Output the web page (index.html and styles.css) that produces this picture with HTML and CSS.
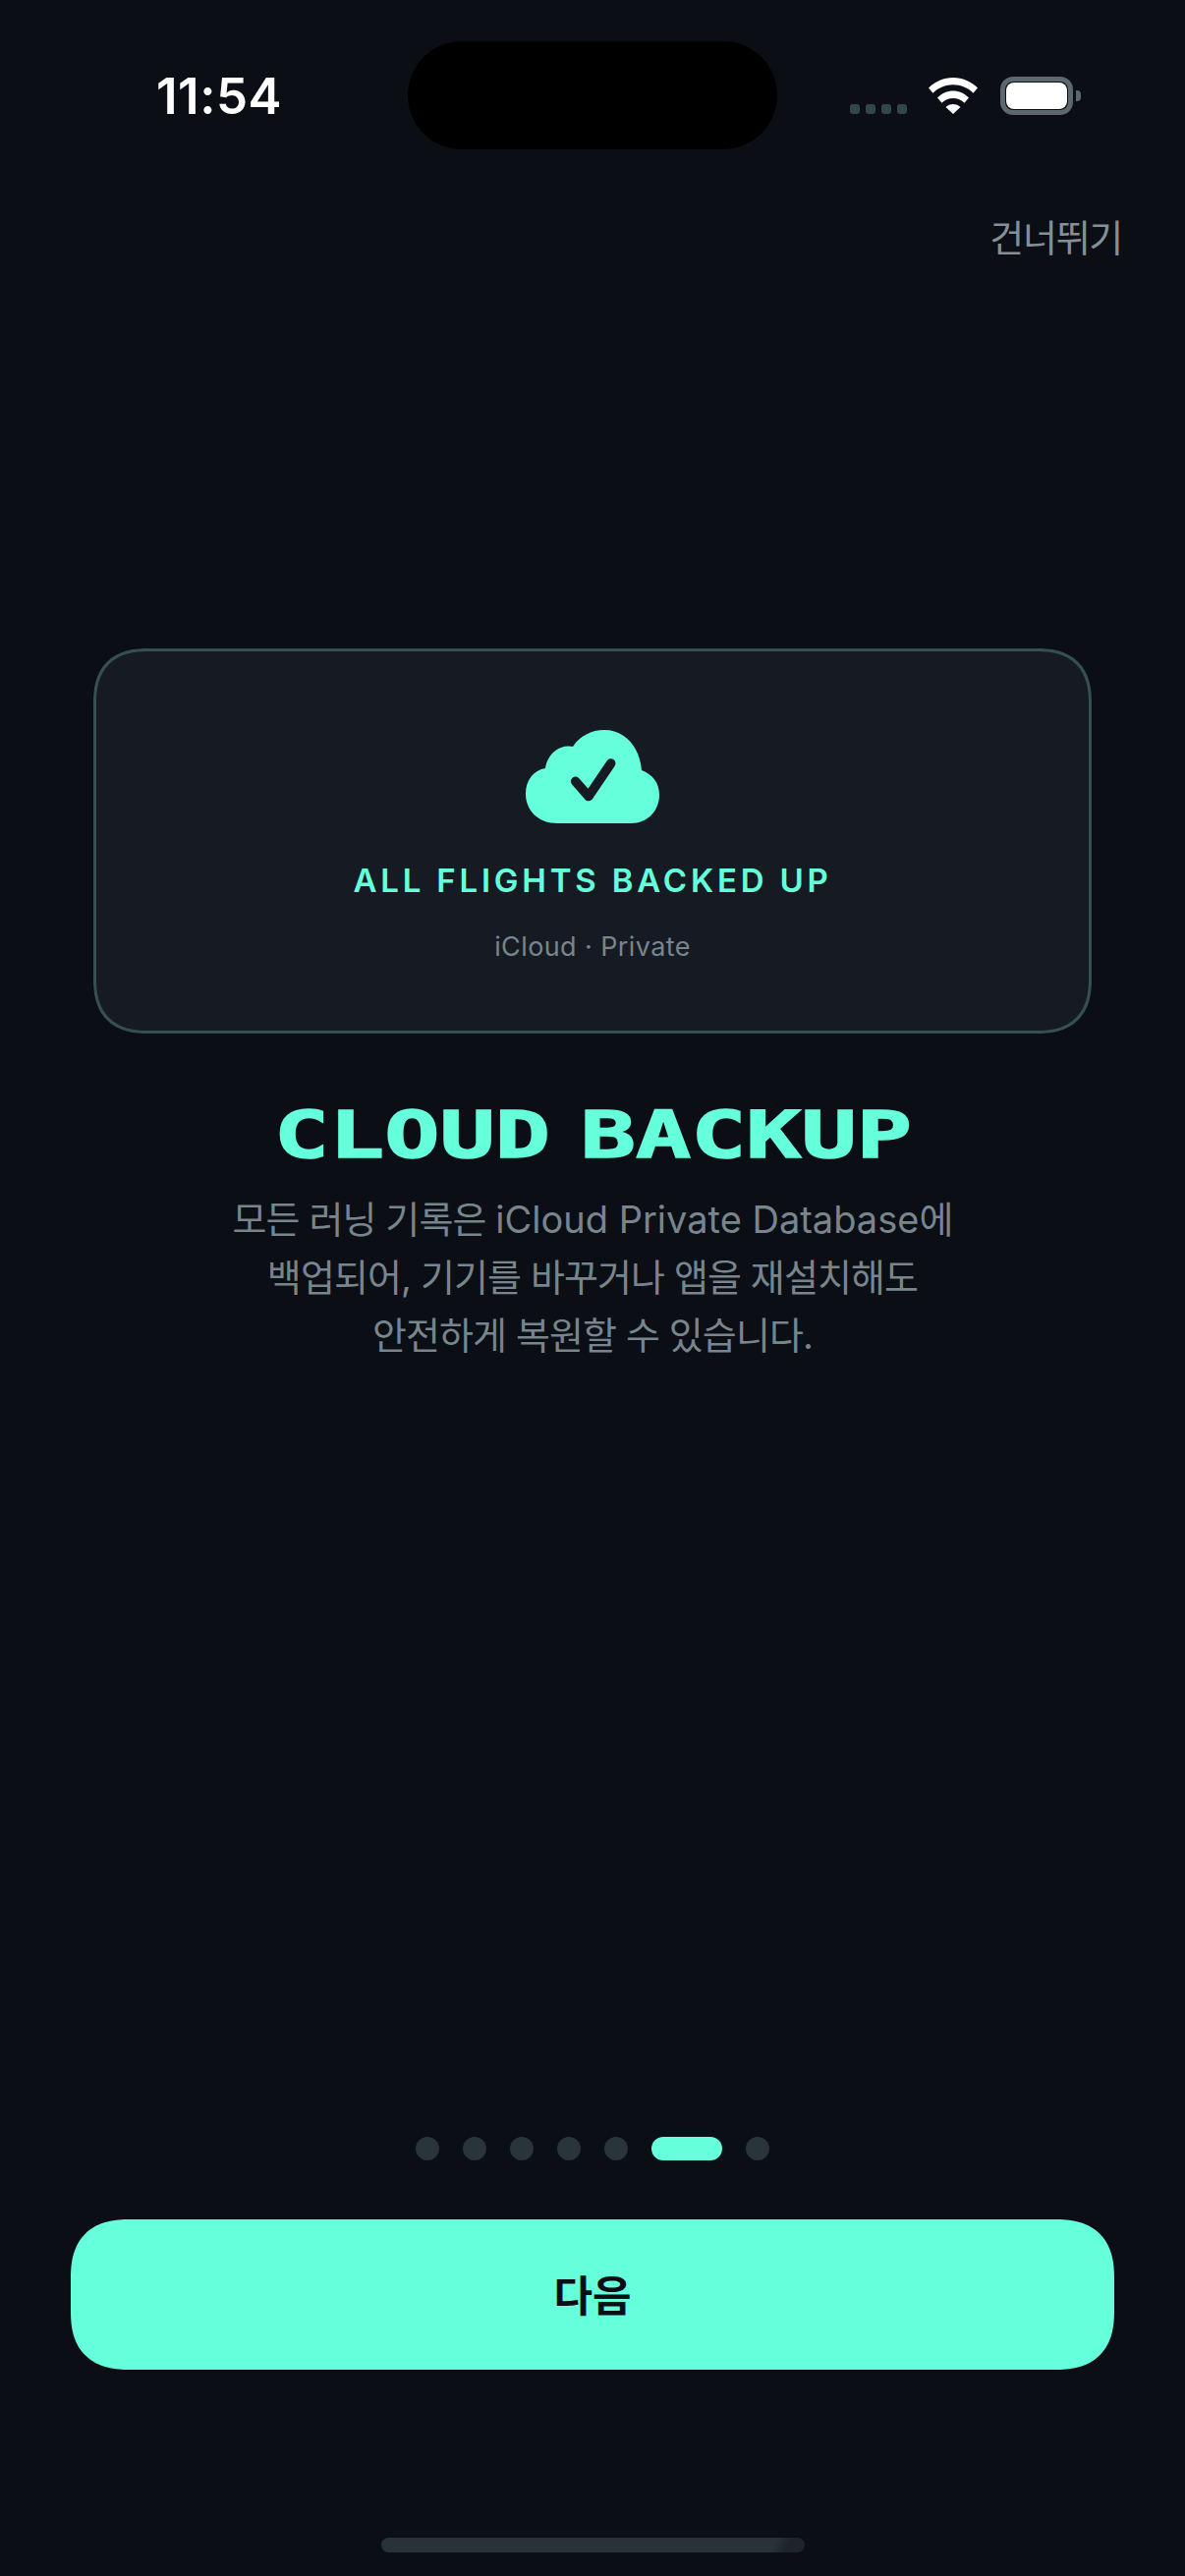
FILE: index.html
```html
<!DOCTYPE html>
<html lang="ko">
<head>
<meta charset="utf-8">
<title>Cloud Backup</title>
<link rel="stylesheet" href="styles.css">
</head>
<body>
<main class="screen">
  <header class="status">
    <span class="time">11:54</span>
    <div class="status-icons">
      <div class="signal"><i></i><i></i><i></i><i></i></div>
      <svg class="wifi" viewBox="0 0 50 37" aria-hidden="true"><path d="M25 0C15.500 0 7 3.700 0 10.500L4.500 15.800C10 10.300 17 7.300 25 7.300S40 10.300 45.500 15.800L50 10.500C43 3.700 34.500 0 25 0Z"/><path d="M25 13.500C19 13.500 13.500 16 9 20.500L13.500 25.800C16.500 22.700 20.500 21 25 21S33.500 22.700 36.500 25.800L41 20.500C36.500 16 31 13.500 25 13.500Z"/><path d="M25 27C22 27 19.700 28 17.500 30L25 37L32.500 30C30.300 28 28 27 25 27Z"/></svg>
      <div class="battery"><div class="battery-body"><div class="battery-fill"></div></div><div class="battery-nub"></div></div>
    </div>
  </header>
  <div class="island"></div>
  <div class="skip-row"><span class="skip">건너뛰기</span></div>

  <section class="card">
    <svg class="cloud" viewBox="0 0 136 95" aria-hidden="true">
      <path class="cloud-shape" d="M32 95C13 95 0 82 0 65C0 51 8 41 20 39C22 25 33 16.500 43 16.500C45 16.500 47 16.700 48 17C55 6 67 0 80 0C101 0 116 17 118 41C129 45 136 54 136 66C136 83 123 95 108 95Z"/>
      <path class="cloud-check" d="M50.700 52.300L64 67.500L86.700 34"/>
    </svg>
    <p class="card-title">ALL FLIGHTS BACKED UP</p>
    <p class="card-sub">iCloud · Private</p>
  </section>

  <h1 class="title">CLOUD BACKUP</h1>
  <p class="desc">모든 러닝 기록은 <span class="latin">iCloud Private Database</span>에<br>백업되어, 기기를 바꾸거나 앱을 재설치해도<br>안전하게 복원할 수 있습니다.</p>

  <div class="spacer"></div>

  <nav class="dots">
    <span class="dot"></span><span class="dot"></span><span class="dot"></span><span class="dot"></span><span class="dot"></span><span class="dot active"></span><span class="dot"></span>
  </nav>
  <button class="next">다음</button>
  <div class="home-bar"></div>
</main>
</body>
</html>
```
FILE: styles.css
```css
* { box-sizing: border-box; margin: 0; padding: 0; }
html, body { width: 1206px; height: 2622px; background: #0b0e15; overflow: hidden; }
body { font-family: "Inter", "Noto Sans CJK KR", sans-serif; color: #fff; }
.screen { position: relative; width: 1206px; height: 2622px; display: flex; flex-direction: column; align-items: center; }

.status { width: 100%; height: 216px; padding: 68px 106px 0 159px; display: flex; justify-content: space-between; align-items: flex-start; flex: none; }
.time { font-size: 51px; line-height: 60px; font-weight: 600; color: #fff; letter-spacing: 0.500px; }
.status-icons { display: flex; align-items: flex-end; height: 39px; margin-top: 10px; }
.signal { display: flex; gap: 6px; margin-bottom: 1px; margin-right: 22px; }
.signal i { width: 10px; height: 10px; border-radius: 3px; background: #33474a; display: block; }
.wifi { width: 50px; height: 37px; fill: #fff; margin-right: 23px; margin-bottom: 1px; }
.battery { display: flex; align-items: center; }
.battery-body { width: 74px; height: 39px; border: 5px solid #5c686e; border-radius: 13px; padding: 1px; }
.battery-fill { width: 100%; height: 100%; background: #fff; border-radius: 8px; }
.battery-nub { width: 5px; height: 11px; margin-left: 3px; background: #5c686e; border-radius: 0 4px 4px 0; }
.island { position: absolute; left: 415px; top: 42px; width: 376px; height: 110px; background: #000; border-radius: 55px; }

.skip-row { width: 100%; display: flex; justify-content: flex-end; padding-right: 64px; flex: none; }
.skip { font-size: 38px; line-height: 48px; color: #858f96; font-family: "Noto Sans CJK KR", sans-serif; letter-spacing: -1.300px; }

.card { margin-top: 396px; width: 1016px; height: 392px; flex: none; background: #161b23; border: 3px solid #34504f; border-radius: 56px; corner-shape: superellipse(1.3); display: flex; flex-direction: column; align-items: center; padding-top: 80px; }
.cloud { width: 136px; height: 95px; display: block; }
.cloud-shape { fill: #66ffdc; }
.cloud-check { fill: none; stroke: #161b23; stroke-width: 9.500; stroke-linecap: round; stroke-linejoin: round; }
.card-title { margin-top: 38px; font-size: 33px; line-height: 40px; font-weight: 600; letter-spacing: 3.800px; color: #66ffdc; white-space: nowrap; }
.card-sub { margin-top: 31px; font-size: 27px; line-height: 34px; color: #78858c; letter-spacing: 0.400px; white-space: nowrap; }

.title { margin-top: 66px; height: 75px; font-family: "DejaVu Sans Mono", monospace; font-size: 66px; line-height: 75px; font-weight: 700; word-spacing: -18px; color: #66ffdc; white-space: nowrap; flex: none; transform: scaleX(1.415); -webkit-text-stroke: 1.500px #66ffdc; }
.desc { margin-top: 19px; font-size: 38px; line-height: 59px; letter-spacing: -0.900px; color: #78858c; text-align: center; white-space: nowrap; flex: none; }
.latin { letter-spacing: 0; }

.spacer { flex: 1; }
.dots { display: flex; gap: 24px; flex: none; }
.dot { width: 24px; height: 24px; border-radius: 12px; background: #2a343b; display: block; }
.dot.active { width: 72px; background: #66ffdc; }
.next { margin-top: 60px; width: 1062px; height: 153px; padding-bottom: 3px; border: 0; border-radius: 60px; corner-shape: superellipse(1.3); background: #66ffdc; color: #0b0e15; font-family: "Noto Sans CJK KR", sans-serif; font-size: 43px; font-weight: 700; flex: none; }
.home-bar { margin-top: 171px; margin-bottom: 24px; width: 431px; height: 15px; border-radius: 8px; background: linear-gradient(118deg, #2a3239 92%, #1d242b 95%); flex: none; }
```
